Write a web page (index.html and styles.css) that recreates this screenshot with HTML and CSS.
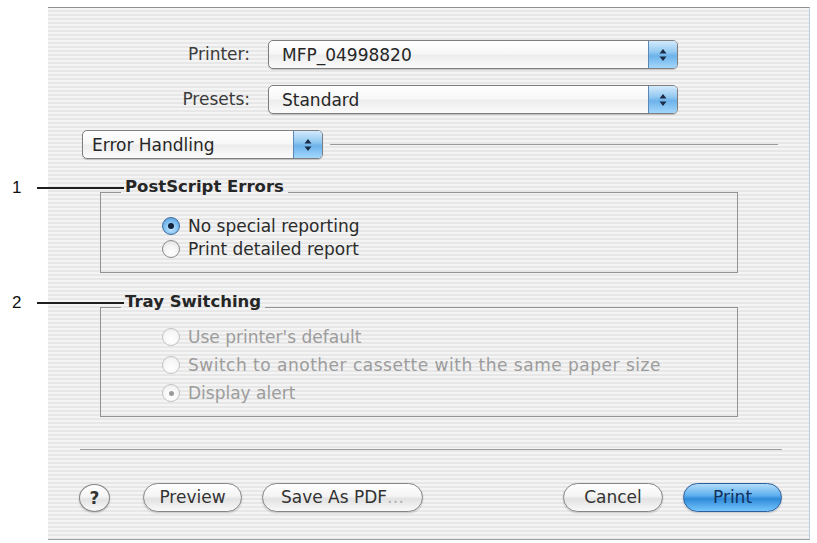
FILE: index.html
```html
<!DOCTYPE html>
<html lang="en">
<head>
<meta charset="utf-8">
<title>Print</title>
<link rel="stylesheet" href="styles.css">
</head>
<body>
<div class="sheet">
  <div class="form-grid">
    <span class="field-label">Printer:</span>
    <div class="popup">
      <span class="popup-text">MFP_04998820</span>
      <span class="popup-arrows"><svg width="8" height="14" viewBox="0 0 8 14"><path d="M4 1 L7.5 5.5 L0.5 5.5 Z M0.5 8.5 L7.5 8.5 L4 13 Z" fill="#1c2c48"/></svg></span>
    </div>
    <span class="field-label">Presets:</span>
    <div class="popup">
      <span class="popup-text">Standard</span>
      <span class="popup-arrows"><svg width="8" height="14" viewBox="0 0 8 14"><path d="M4 1 L7.5 5.5 L0.5 5.5 Z M0.5 8.5 L7.5 8.5 L4 13 Z" fill="#1c2c48"/></svg></span>
    </div>
  </div>

  <div class="pane-row">
    <div class="popup popup-pane">
      <span class="popup-text">Error Handling</span>
      <span class="popup-arrows"><svg width="8" height="14" viewBox="0 0 8 14"><path d="M4 1 L7.5 5.5 L0.5 5.5 Z M0.5 8.5 L7.5 8.5 L4 13 Z" fill="#1c2c48"/></svg></span>
    </div>
    <div class="pane-rule"></div>
  </div>

  <div class="group-wrap group-ps">
    <fieldset class="group">
      <legend class="group-title">PostScript Errors</legend>
      <div class="options">
        <div class="option"><span class="radio radio-on"></span><span>No special reporting</span></div>
        <div class="option"><span class="radio"></span><span>Print detailed report</span></div>
      </div>
    </fieldset>
    <div class="callout"><span class="callout-num">1</span><span class="callout-line"></span></div>
  </div>

  <div class="group-wrap group-tray">
    <fieldset class="group">
      <legend class="group-title">Tray Switching</legend>
      <div class="options options-off">
        <div class="option"><span class="radio"></span><span>Use printer's default</span></div>
        <div class="option option-wide"><span class="radio"></span><span>Switch to another cassette with the same paper size</span></div>
        <div class="option"><span class="radio radio-dot"></span><span>Display alert</span></div>
      </div>
    </fieldset>
    <div class="callout"><span class="callout-num">2</span><span class="callout-line"></span></div>
  </div>

  <div class="separator"></div>

  <div class="button-bar">
    <button class="help-btn">?</button>
    <button class="btn btn-preview">Preview</button>
    <button class="btn btn-pdf">Save As PDF<span class="dim">…</span></button>
    <span class="bar-spacer"></span>
    <button class="btn btn-cancel">Cancel</button>
    <button class="btn btn-print">Print</button>
  </div>
</div>
</body>
</html>
```

FILE: styles.css
```css
html, body {
  margin: 0;
  background: #ffffff;
}

body {
  padding: 7px 0 0 48px;
  font-family: "DejaVu Sans", "Noto Sans", sans-serif;
  font-size: 17px;
  color: #2b2b2b;
}

/* pinstriped dialog sheet */
.sheet {
  box-sizing: border-box;
  width: 762px;
  height: 533px;
  padding-top: 32px;
  border-top: 1px solid #8f8f8f;
  border-right: 1px solid #b7cde0;
  border-bottom: 1px solid #a0a0a0;
  background: repeating-linear-gradient(to bottom, #f4f4f4 0, #f4f4f4 2px, #e7e7e7 2px, #e7e7e7 4px);
  display: flex;
  flex-direction: column;
}

/* printer / presets rows */
.form-grid {
  display: grid;
  grid-template-columns: 202px 410px;
  column-gap: 18px;
  row-gap: 16px;
  align-items: center;
}

.field-label {
  text-align: right;
  color: #3a3a3a;
  line-height: 29px;
}

/* popup menus */
.popup {
  box-sizing: border-box;
  display: flex;
  height: 29px;
  border: 1px solid #7e7e7e;
  border-radius: 5px;
  background: linear-gradient(to bottom, #ffffff 0%, #f7f7f7 48%, #ececec 52%, #fbfbfb 100%);
  box-shadow: 0 1px 1px rgba(0, 0, 0, 0.18);
  overflow: hidden;
}

.popup-text {
  flex: 1;
  padding-left: 13px;
  padding-top: 1px;
  line-height: 27px;
  color: #262626;
  white-space: nowrap;
}

.popup-arrows {
  width: 28px;
  display: flex;
  align-items: center;
  justify-content: center;
  border-left: 1px solid #5b87b6;
  background: linear-gradient(to bottom, #d3eafc 0%, #93c9f1 40%, #6cb2ea 55%, #a3d7fb 100%);
}

/* pane selector */
.pane-row {
  margin-top: 16px;
  margin-left: 34px;
  margin-right: 31px;
  display: flex;
  align-items: center;
  gap: 7px;
}

.popup-pane {
  width: 241px;
}

.popup-pane .popup-text {
  padding-left: 9px;
}

.pane-rule {
  flex: 1;
  height: 1px;
  background: #9a9a9a;
}

/* option groups */
.group-wrap {
  position: relative;
  margin-left: 52px;
  width: 638px;
}

.group-ps {
  margin-top: 18px;
}

.group-tray {
  margin-top: 19px;
}

.group {
  box-sizing: border-box;
  width: 100%;
  margin: 0;
  min-width: 0;
  border: 1px solid #939393;
  padding: 6px 0 12px 20px;
}

.group-tray .group {
  padding-top: 0;
  padding-bottom: 9px;
}

.group-title {
  padding: 0 4px 11px;
  font-weight: bold;
  font-size: 16.5px;
  line-height: 20px;
  color: #262626;
}

.options {
  margin-left: 41px;
  display: flex;
  flex-direction: column;
}

.option {
  display: flex;
  align-items: center;
  gap: 8px;
  height: 23px;
  white-space: nowrap;
}

.options-off .option {
  height: 28px;
  color: #9c9c9c;
}

.option-wide {
  letter-spacing: 0.5px;
}

/* radio buttons */
.radio {
  box-sizing: border-box;
  flex: none;
  width: 18px;
  height: 18px;
  border-radius: 50%;
  border: 1px solid #8b8b8b;
  background: radial-gradient(circle at 50% 70%, #ffffff 0%, #f3f3f3 50%, #d9d9d9 100%);
  display: flex;
  align-items: center;
  justify-content: center;
}

.radio-on {
  border-color: #3e6c9c;
  background: radial-gradient(circle at 50% 65%, #c6e7ff 0%, #7dbdf0 55%, #4a92d6 100%);
}

.radio-on::after {
  content: "";
  width: 6px;
  height: 6px;
  border-radius: 50%;
  background: #14233a;
}

.options-off .radio {
  border-color: #c3c3c3;
  background: radial-gradient(circle at 50% 70%, #ffffff 0%, #f6f6f6 60%, #e9e9e9 100%);
}

.radio-dot::after {
  content: "";
  width: 5px;
  height: 5px;
  border-radius: 50%;
  background: #9a9a9a;
}

/* numbered callouts beside the groups */
.callout {
  position: absolute;
  left: -88px;
  top: 0;
  height: 21px;
  display: flex;
  align-items: center;
  gap: 16px;
}

.callout-num {
  font-family: "Liberation Sans", Arial, sans-serif;
  font-size: 17px;
  color: #111111;
}

.callout-line {
  width: 87px;
  height: 2px;
  background: #1e1e1e;
}

/* footer */
.separator {
  margin: 32px 27px 0 32px;
  height: 1px;
  background: #9d9d9d;
}

.button-bar {
  margin-top: 33px;
  padding: 0 27px 0 31px;
  display: flex;
  align-items: center;
  height: 29px;
}

.bar-spacer {
  flex: 1;
}

.help-btn,
.btn {
  box-sizing: border-box;
  font-family: "DejaVu Sans", "Noto Sans", sans-serif;
  font-size: 17px;
  color: #333333;
  padding: 0;
  border: 1px solid #858585;
  background: linear-gradient(to bottom, #ffffff 0%, #f4f4f4 45%, #e2e2e2 55%, #f9f9f9 100%);
  box-shadow: 0 1px 2px rgba(0, 0, 0, 0.2);
}

.help-btn {
  width: 31px;
  height: 28px;
  border-radius: 50%;
  font-weight: bold;
  line-height: 26px;
}

.btn {
  height: 29px;
  border-radius: 15px;
  line-height: 27px;
  white-space: nowrap;
}

.btn-preview {
  width: 99px;
  margin-left: 33px;
}

.btn-pdf {
  width: 161px;
  margin-left: 20px;
}

.btn-cancel {
  width: 100px;
}

.btn-print {
  width: 99px;
  margin-left: 20px;
  color: #11305c;
  border-color: #2d5f9c;
  background: linear-gradient(to bottom, #b3dcfa 0%, #5fb0ee 42%, #2f8ad9 55%, #76c6fd 100%);
}

.dim {
  color: #b0b0b0;
}
```
